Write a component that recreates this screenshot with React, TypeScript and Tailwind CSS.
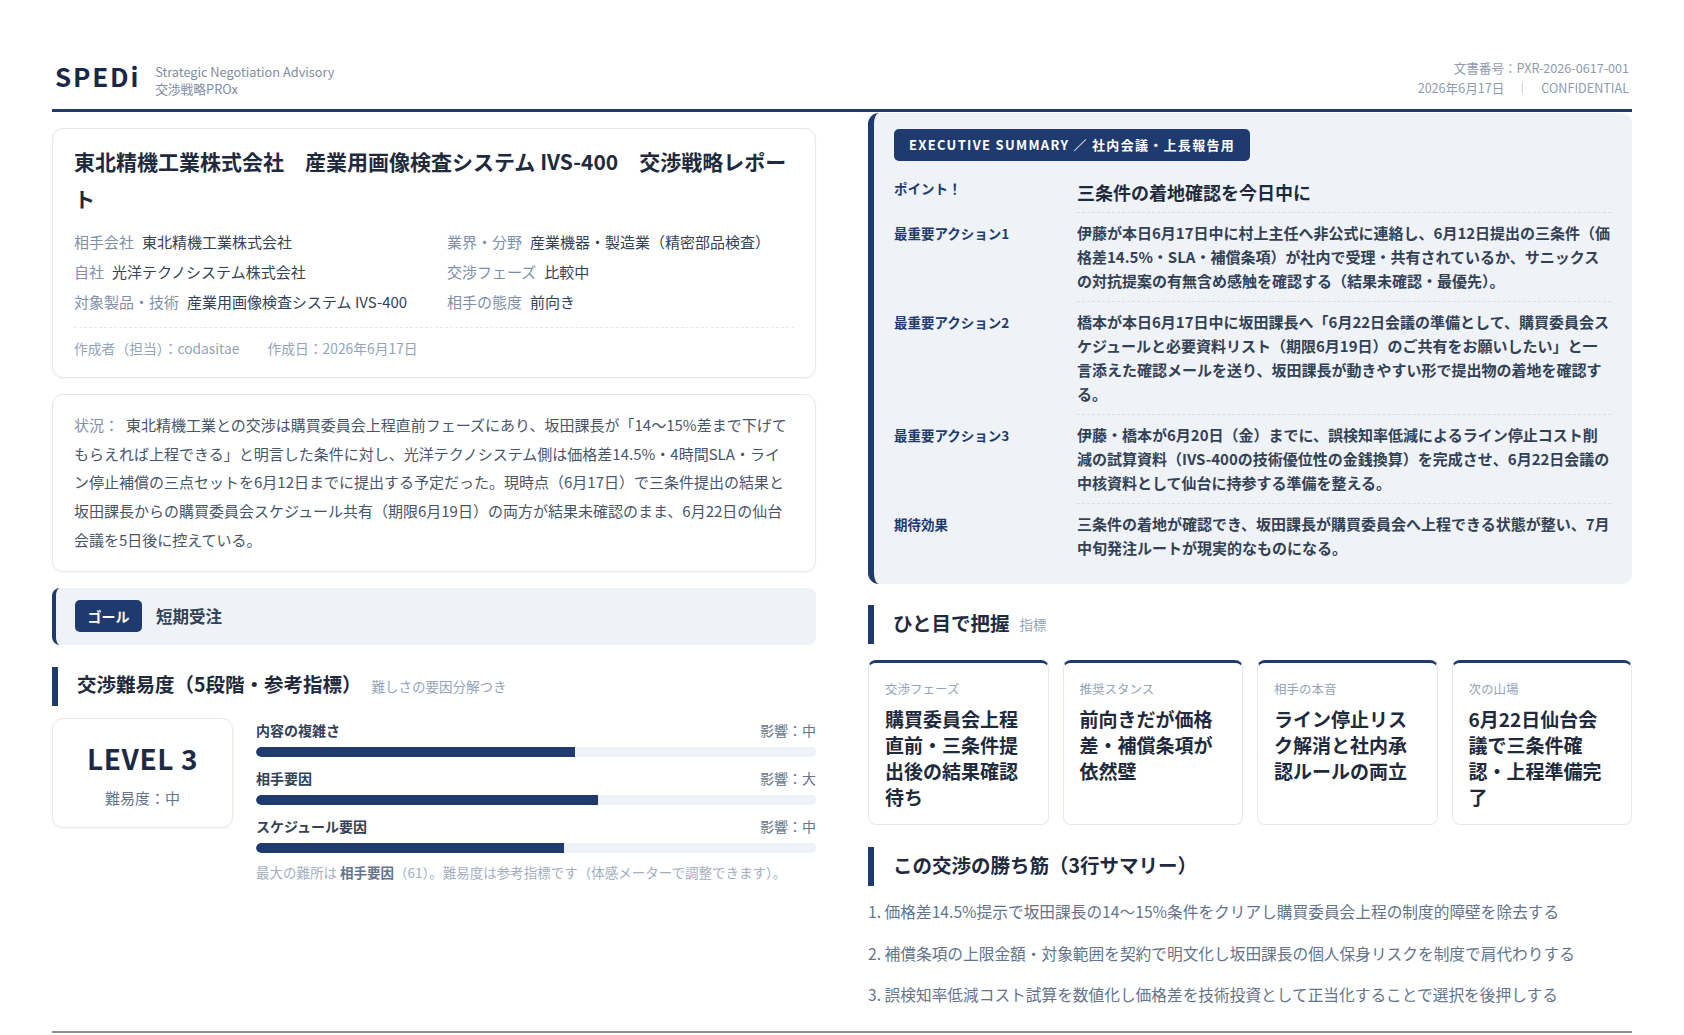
const metaRows = [
  [
    ["相手会社", "東北精機工業株式会社"],
    ["業界・分野", "産業機器・製造業（精密部品検査）"],
  ],
  [
    ["自社", "光洋テクノシステム株式会社"],
    ["交渉フェーズ", "比較中"],
  ],
  [
    ["対象製品・技術", "産業用画像検査システム IVS-400"],
    ["相手の態度", "前向き"],
  ],
];

const factors = [
  { name: "内容の複雑さ", impact: "影響：中", value: 57 },
  { name: "相手要因", impact: "影響：大", value: 61 },
  { name: "スケジュール要因", impact: "影響：中", value: 55 },
];

const summaryRows = [
  {
    label: "最重要アクション1",
    text: "伊藤が本日6月17日中に村上主任へ非公式に連絡し、6月12日提出の三条件（価格差14.5%・SLA・補償条項）が社内で受理・共有されているか、サニックスの対抗提案の有無含め感触を確認する（結果未確認・最優先）。",
  },
  {
    label: "最重要アクション2",
    text: "橋本が本日6月17日中に坂田課長へ「6月22日会議の準備として、購買委員会スケジュールと必要資料リスト（期限6月19日）のご共有をお願いしたい」と一言添えた確認メールを送り、坂田課長が動きやすい形で提出物の着地を確認する。",
  },
  {
    label: "最重要アクション3",
    text: "伊藤・橋本が6月20日（金）までに、誤検知率低減によるライン停止コスト削減の試算資料（IVS-400の技術優位性の金銭換算）を完成させ、6月22日会議の中核資料として仙台に持参する準備を整える。",
  },
  {
    label: "期待効果",
    text: "三条件の着地が確認でき、坂田課長が購買委員会へ上程できる状態が整い、7月中旬発注ルートが現実的なものになる。",
  },
];

const kpis = [
  { label: "交渉フェーズ", value: "購買委員会上程直前・三条件提出後の結果確認待ち" },
  { label: "推奨スタンス", value: "前向きだが価格差・補償条項が依然壁" },
  { label: "相手の本音", value: "ライン停止リスク解消と社内承認ルールの両立" },
  { label: "次の山場", value: "6月22日仙台会議で三条件確認・上程準備完了" },
];

const winPoints = [
  "1. 価格差14.5%提示で坂田課長の14〜15%条件をクリアし購買委員会上程の制度的障壁を除去する",
  "2. 補償条項の上限金額・対象範囲を契約で明文化し坂田課長の個人保身リスクを制度で肩代わりする",
  "3. 誤検知率低減コスト試算を数値化し価格差を技術投資として正当化することで選択を後押しする",
];

function SectionTitle({ title, sub }: { title: string; sub?: string }) {
  return (
    <div className="flex h-[39px] items-center border-l-[6px] border-[#1e3a6e] pb-[4px] pl-[19px]">
      <h2 className="text-[19.5px] font-bold text-[#1f2a3d]">{title}</h2>
      {sub && <span className="ml-[10px] pt-[4px] text-[13.5px] text-[#94a3b8]">{sub}</span>}
    </div>
  );
}

export default function App() {
  return (
    <div className="h-[1035px] overflow-hidden bg-white px-[52px] pt-[58px] font-['Noto_Sans_CJK_JP','Noto_Sans',sans-serif] text-[#1f2a3d]">
      {/* Header */}
      <header className="flex h-[54px] justify-between border-b-[3px] border-[#1e3a6e]">
        <div className="flex items-start gap-[15px] pl-[3px]">
          <div className="text-[26px] leading-[36px] font-bold tracking-[0.07em] text-[#172848]">SPEDi</div>
          <div className="pt-[6px] text-[12.75px] leading-[16.5px] text-[#7f8ca0]">
            <div>Strategic Negotiation Advisory</div>
            <div>交渉戦略PROx</div>
          </div>
        </div>
        <div className="pr-[3px] text-right text-[12.6px] leading-[20px] text-[#8f9bad]">
          <div>文書番号：PXR-2026-0617-001</div>
          <div className="flex items-center justify-end">
            <span>2026年6月17日</span>
            <span className="mx-[18px] h-[12px] w-px bg-[#cbd5e1]" />
            <span>CONFIDENTIAL</span>
          </div>
        </div>
      </header>

      <div className="grid grid-cols-2 gap-[52px]">
        {/* Left column */}
        <div className="pt-[16px]">
          <section className="rounded-[11px] border border-[#e2e8f0] px-[21px] pt-[14px] pb-[19px] shadow-[0_1px_2px_rgba(15,23,42,0.05)]">
            <h1 className="text-[21px] leading-[37px] font-bold text-[#1f2a3d]">
              東北精機工業株式会社　産業用画像検査システム IVS-400　交渉戦略レポート
            </h1>
            <div className="mt-[10px] flex flex-col">
              {metaRows.map((row, i) => (
                <div key={i} className="grid h-[30px] grid-cols-[373px_1fr] items-center text-[15px]">
                  {row.map(([k, v]) => (
                    <div key={k} className="whitespace-nowrap">
                      <span className="mr-[8px] text-[#7f8fa9]">{k}</span>
                      <span className="text-[#334155]">{v}</span>
                    </div>
                  ))}
                </div>
              ))}
            </div>
            <div className="mt-[10px] flex gap-[28px] border-t border-dashed border-[#e2e8f0] pt-[10px] text-[13.8px] leading-[20px] text-[#94a3b8]">
              <span>作成者（担当）：codasitae</span>
              <span>作成日：2026年6月17日</span>
            </div>
          </section>

          <section className="mt-[16px] rounded-[11px] border border-[#e2e8f0] px-[21px] pt-[16px] pb-[16px] text-[15px] leading-[28.7px] text-[#475569] shadow-[0_1px_2px_rgba(15,23,42,0.05)]">
            <p>
              <span className="mr-[7px] text-[#7f8fa9]">状況：</span>
              東北精機工業との交渉は購買委員会上程直前フェーズにあり、坂田課長が「14〜15%差まで下げてもらえれば上程できる」と明言した条件に対し、光洋テクノシステム側は価格差14.5%・4時間SLA・ライン停止補償の三点セットを6月12日までに提出する予定だった。現時点（6月17日）で三条件提出の結果と坂田課長からの購買委員会スケジュール共有（期限6月19日）の両方が結果未確認のまま、6月22日の仙台会議を5日後に控えている。
            </p>
          </section>

          <section className="mt-[16px] flex h-[57px] items-center gap-[14px] rounded-[8px] border-l-[4px] border-[#1e3a6e] bg-[#eff3f8] pl-[19px]">
            <span className="flex h-[32px] w-[67px] items-center justify-center rounded-[5px] bg-[#1e3a6e] text-[14px] font-bold text-white">
              ゴール
            </span>
            <span className="text-[16.5px] font-semibold text-[#334155]">短期受注</span>
          </section>

          <div className="mt-[22px]">
            <SectionTitle title="交渉難易度（5段階・参考指標）" sub="難しさの要因分解つき" />
          </div>

          <div className="mt-[12px] flex gap-[23px]">
            <div className="flex h-[110px] w-[181px] shrink-0 flex-col items-center rounded-[11px] border border-[#e2e8f0] pt-[19px] shadow-[0_1px_2px_rgba(15,23,42,0.05)]">
              <div className="text-[28px] leading-[40px] font-bold tracking-[0.02em] text-[#1e2a44]">LEVEL 3</div>
              <div className="mt-[9px] text-[15px] leading-[22px] text-[#64748b]">難易度：中</div>
            </div>
            <div className="flex-1">
              {factors.map((f) => (
                <div key={f.name} className="h-[48px]">
                  <div className="flex h-[29px] items-center justify-between pb-[5px] text-[14px] leading-[20px]">
                    <span className="font-semibold text-[#334155]">{f.name}</span>
                    <span className="text-[#64748b]">{f.impact}</span>
                  </div>
                  <div className="h-[10px] overflow-hidden rounded-full bg-[#eff3f7]">
                    <div className="h-full rounded-l-full bg-[#1e3a6e]" style={{ width: `${f.value}%` }} />
                  </div>
                </div>
              ))}
              <p className="text-[13.5px] leading-[20px] text-[#a3afc0]">
                最大の難所は <span className="font-semibold text-[#64748b]">相手要因</span>（61）。難易度は参考指標です（体感メーターで調整できます）。
              </p>
            </div>
          </div>
        </div>

        {/* Right column */}
        <div className="pt-[1px]">
          <section className="rounded-[11px] border-l-[6px] border-[#1e3a6e] bg-[#eff3f8] pt-[16px] pr-[21px] pb-[16px] pl-[20px]">
            <div className="inline-flex h-[32px] items-center rounded-[5px] bg-[#1e3a6e] px-[15px] text-[13px] font-bold tracking-[0.1em] text-white">
              EXECUTIVE SUMMARY ／ 社内会議・上長報告用
            </div>
            <div className="mt-[6px] grid grid-cols-[183px_1fr]">
              <div className="pt-[9px] text-[13.5px] leading-[24px] font-bold text-[#1e3a6e]">ポイント！</div>
              <div className="border-b border-dashed border-[#d5dde8] pt-[9px] pb-[4px] text-[18px] leading-[32px] font-bold text-[#1f2a3d]">
                三条件の着地確認を今日中に
              </div>
              {summaryRows.map((r, i) => (
                <div key={r.label} className="contents">
                  <div className="pt-[8px] text-[13.5px] leading-[24px] font-bold text-[#1e3a6e]">{r.label}</div>
                  <div
                    className={`pt-[8px] pb-[8px] text-[15px] leading-[24px] font-semibold text-[#334155] ${
                      i < summaryRows.length - 1 ? "border-b border-dashed border-[#d5dde8]" : ""
                    }`}
                  >
                    {r.text}
                  </div>
                </div>
              ))}
            </div>
          </section>

          <div className="mt-[21px]">
            <SectionTitle title="ひと目で把握" sub="指標" />
          </div>

          <div className="mt-[16px] grid grid-cols-4 gap-[14px]">
            {kpis.map((k) => (
              <div key={k.label} className="h-[165px] rounded-[8px] border border-t-[3px] border-[#e2e8f0] border-t-[#1e3a6e] px-[16px] pt-[17px]">
                <div className="text-[12.5px] leading-[18px] text-[#94a3b8]">{k.label}</div>
                <div className="mt-[8px] text-[19px] leading-[26px] font-bold text-[#1f2a3d]">{k.value}</div>
              </div>
            ))}
          </div>

          <div className="mt-[22px]">
            <SectionTitle title="この交渉の勝ち筋（3行サマリー）" />
          </div>

          <ol className="mt-[15px] flex flex-col gap-[19.5px] text-[15.7px] leading-[22px] whitespace-nowrap text-[#64748b]">
            {winPoints.map((p) => (
              <li key={p}>{p}</li>
            ))}
          </ol>
        </div>
      </div>

      <div className="mt-[25px] border-t-2 border-[#8f9194]" />
    </div>
  );
}
